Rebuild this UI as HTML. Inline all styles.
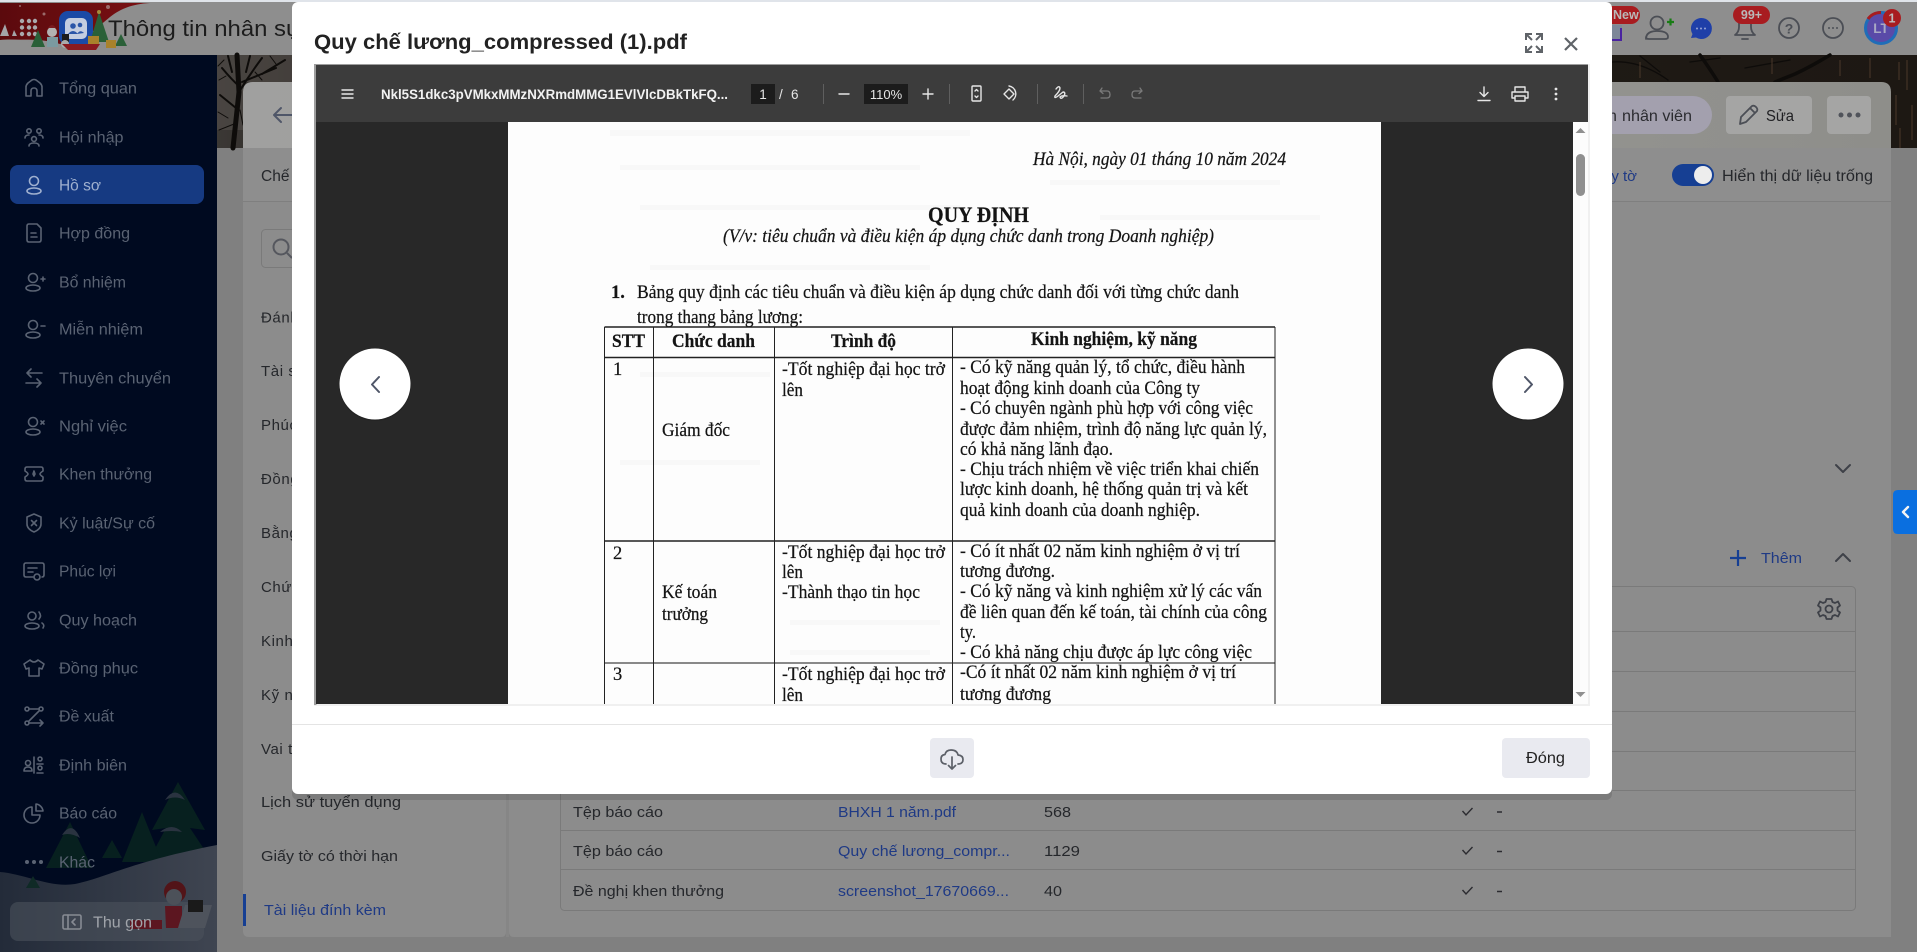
<!DOCTYPE html>
<html lang="vi"><head><meta charset="utf-8"><title>Quy chế lương</title>
<style>
html,body{margin:0;padding:0;width:1917px;height:952px;overflow:hidden;background:#808080}
svg{display:block;position:absolute;left:0;top:0}
text{font-family:"Liberation Sans","Noto Sans CJK SC",sans-serif}
.m text{fill:#5a6373;font-size:15.5px}
.ic{fill:none;stroke:#5a6373;stroke-width:1.6;stroke-linecap:round;stroke-linejoin:round}
.l text{fill:#25272b;font-size:15px}
.t text{fill:#25272b;font-size:14.5px}
.a{fill:#1f3a85!important}
.pdf text{font-family:"Liberation Serif","Noto Serif CJK SC",serif;fill:#141414;stroke:#141414;stroke-width:.22px;font-size:18.5px}
.pdf .b{font-weight:bold}
.pdf .i{font-style:italic}
.tb{fill:none;stroke:#e6e6e6;stroke-width:1.4;stroke-linecap:round;stroke-linejoin:round}
.ti{fill:none;stroke:#4b4e55;stroke-width:1.8;stroke-linecap:round;stroke-linejoin:round}
</style></head><body>
<svg width="1917" height="952" viewBox="0 0 1917 952" xmlns="http://www.w3.org/2000/svg">
<defs>
<clipPath id="cp"><rect x="317" y="122" width="1256" height="582"/></clipPath>
<linearGradient id="hd" x1="0" x2="1"><stop offset="0" stop-color="#a0a09f"/><stop offset=".5" stop-color="#9a9a98"/><stop offset="1" stop-color="#8e8e8a"/></linearGradient>
<linearGradient id="bg" x1="0" x2="1"><stop offset="0" stop-color="#3b3835"/><stop offset=".08" stop-color="#24201c"/><stop offset="1" stop-color="#1d1813"/></linearGradient>
<linearGradient id="sn" x1="0" y1="0" x2="1" y2="0"><stop offset="0" stop-color="#232b39"/><stop offset="1" stop-color="#3f4551"/></linearGradient>
<linearGradient id="red" x1="0" x2="1"><stop offset="0" stop-color="#5b0a0d"/><stop offset="1" stop-color="#7a1013"/></linearGradient>
</defs>

<!-- page base -->
<rect width="1917" height="952" fill="#808080"/>
<rect width="1917" height="55" fill="#8e8e8e"/>
<rect width="1917" height="2" fill="#e0e4ea"/>

<!-- header art -->
<path d="M0 3H150C132 4 120 9 110 17L92 32L60 44C40 38 20 40 0 40Z" fill="url(#red)"/>
<path d="M0 40C20 38 30 42 45 44L70 48H130V55H0Z" fill="#8f8f8f"/>
<path d="M0 36L5 24L9 36ZM12 36L14 30L17 36Z" fill="#a5a5a8"/>
<g fill="#a9a9ad"><circle cx="22" cy="21" r="2.2"/><circle cx="29" cy="21" r="2.2"/><circle cx="35" cy="21" r="2.2"/><circle cx="22" cy="27.500" r="2.2"/><circle cx="29" cy="27.500" r="2.2"/><circle cx="35" cy="27.500" r="2.2"/><circle cx="22" cy="34" r="2.2"/><circle cx="29" cy="34" r="2.2"/><circle cx="35" cy="34" r="2.2"/></g>
<circle cx="20" cy="6" r="1" fill="#9a6a6a"/><circle cx="44" cy="14" r="1.500" fill="#9a6a6a"/><circle cx="108" cy="7" r="2" fill="#9a6a6a"/>
<rect x="59" y="11" width="34" height="34" rx="9" fill="#1b4aa6"/>
<rect x="65" y="18" width="22" height="21" rx="5" fill="#c4cde0"/>
<circle cx="73" cy="26" r="2.8" fill="#2a55a8"/><circle cx="80" cy="25" r="2.3" fill="#2a55a8"/><path d="M68 34Q73 28 78 34ZM77 34Q80 29 84 33Z" fill="#2a55a8"/>
<path d="M99 12L109 42H90Z" fill="#2a6038"/><circle cx="99" cy="12" r="2" fill="#a58a3a"/>
<path d="M38 30L45 47H31Z" fill="#2a6038"/><path d="M121 34L127 46H115Z" fill="#2a6038"/>
<circle cx="52" cy="32" r="5" fill="#b2b2b2"/><rect x="47" y="37" width="11" height="10" fill="#7b9aa0"/><path d="M48 28Q52 22 56 28Z" fill="#7a1a1e"/>
<rect x="62" y="34" width="7" height="8" fill="#1c1c1c"/><circle cx="65" cy="44" r="4" fill="#ababab"/>
<rect x="88" y="36" width="11" height="8" fill="#a9822c"/><rect x="106" y="40" width="10" height="8" fill="#a9822c"/>
<path d="M62 44H100L96 50H68Z" fill="#8a1a20"/>
<text x="108" y="36" font-size="22.5" fill="#1c1c1c" textLength="194" lengthAdjust="spacingAndGlyphs">Thông tin nhân sự</text>

<!-- header right icons -->
<rect x="1612" y="25" width="10" height="14" fill="#7d8798"/>
<path d="M1612 40H1621V28" fill="none" stroke="#4a23a0" stroke-width="2"/>
<rect x="1590" y="6" width="50" height="18" rx="9" fill="#a81c20"/>
<text x="1613" y="19" font-size="12.500" font-weight="bold" fill="#b9b9b9">New</text>
<g class="ti" stroke="#555"><circle cx="1657" cy="23" r="6.5"/><path d="M1646 39Q1646 31 1657 31Q1668 31 1668 37Q1668 39 1665 39H1649Q1646 39 1646 37Z"/></g>
<path d="M1667 22H1674M1670.500 18.500V25.500" stroke="#187c14" stroke-width="2.200" fill="none"/>
<path d="M1701 18A10.500 10.500 0 1 1 1696 37.500L1691 38L1692.500 34A10.500 10.500 0 0 1 1701 18Z" fill="#1f3fa8"/>
<g fill="#97a5d6"><circle cx="1697" cy="28.500" r="1"/><circle cx="1701" cy="28.500" r="1"/><circle cx="1705" cy="28.500" r="1"/></g>
<g class="ti"><path d="M1735 35Q1739 32 1739 27V22H1751V27Q1751 32 1755 35Z"/><path d="M1742 39H1748"/></g>
<rect x="1733" y="6" width="37" height="18" rx="9" fill="#a81c20"/>
<text x="1751.500" y="19" font-size="12.500" font-weight="bold" fill="#b9b9b9" text-anchor="middle">99+</text>
<circle cx="1789" cy="28" r="10" class="ti"/>
<text x="1789" y="33.500" font-size="14" font-weight="bold" fill="#4b4e55" text-anchor="middle">?</text>
<circle cx="1833" cy="28" r="10" class="ti"/>
<g fill="#4b4e55"><circle cx="1829" cy="28" r="1"/><circle cx="1833" cy="28" r="1"/><circle cx="1837" cy="28" r="1"/></g>
<circle cx="1881" cy="28" r="15.500" fill="#5a4aa8" stroke="#1f6db8" stroke-width="3"/>
<path d="M1868 19A15.500 15.500 0 0 1 1881 12.500" fill="none" stroke="#a81c20" stroke-width="3"/>
<text x="1881" y="33" font-size="13.500" font-weight="bold" fill="#a9a9c4" text-anchor="middle">LT</text>
<circle cx="1892" cy="18" r="9" fill="#a81c20"/>
<text x="1892" y="22.500" font-size="12.500" font-weight="bold" fill="#bdbdbd" text-anchor="middle">1</text>

<!-- bg image band -->
<rect x="217" y="55" width="1700" height="93" fill="url(#bg)"/>
<path d="M217 55H292V82H243V130H217Z" fill="#55514c" opacity=".55"/>
<g fill="none" stroke="#0e0c0a" stroke-linecap="round">
<path d="M237 55L239 92L233 148" stroke-width="5"/>
<path d="M222 68Q232 80 239 86M262 58Q250 74 239 92M276 68Q252 78 242 82M220 95L236 108M228 56L232 72M250 56L246 72M285 60L262 74" stroke-width="2"/>
<path d="M219 80L226 76M224 60L218 66M270 56L276 64M255 72L262 80M218 112L228 118M240 110L243 125M219 130L234 124" stroke-width="1"/>
<path d="M1700 55Q1712 72 1718 82M1830 55Q1812 66 1795 74L1775 82" stroke-width="3.500"/>
<path d="M1612 62Q1640 60 1668 80M1640 56L1660 72M1690 62L1720 58M1745 68L1790 60" stroke-width="1.300"/>
</g>
<g fill="none" stroke="#4a382a" stroke-width="1">
<path d="M1896 95V125M1907 60V90M1899 62V80M1912 105V140M1870 58V78M1840 60V76M1772 58V74M1640 62V78M1900 128V148"/>
</g>
<!-- card header -->
<path d="M243 148V92Q243 82 253 82H1881Q1891 82 1891 92V148Z" fill="url(#hd)"/>
<path d="M274 115H292M274 115L281 108M274 115L281 122" fill="none" stroke="#4f5668" stroke-width="2" stroke-linecap="round" stroke-linejoin="round"/>
<rect x="1500" y="96" width="212" height="38" rx="19" fill="#a3a0ae"/>
<text x="1608" y="121" font-size="16" fill="#2b2b30">n</text>
<text x="1622" y="121" font-size="16" fill="#2b2b30" textLength="70" lengthAdjust="spacingAndGlyphs">nhân viên</text>
<rect x="1726" y="96" width="86" height="38" rx="4" fill="#a5a5a4"/>
<path d="M1740 124L1741 117L1752 106Q1754 105 1756 107Q1758 109 1757 111L1746 122ZM1750 108L1755 113" fill="none" stroke="#4b4e55" stroke-width="1.800" stroke-linejoin="round"/>
<text x="1766" y="121" font-size="16" fill="#1f1f22" textLength="28" lengthAdjust="spacingAndGlyphs">Sửa</text>
<rect x="1827" y="96" width="44" height="38" rx="4" fill="#a5a5a4"/>
<g fill="#50535a"><circle cx="1841" cy="115" r="2.500"/><circle cx="1849.500" cy="115" r="2.500"/><circle cx="1858" cy="115" r="2.500"/></g>

<!-- card body -->
<path d="M243 148H1891V937H514Q509 937 509 932V205H506V932Q506 937 501 937H249Q243 937 243 931Z" fill="#8c8c8c"/>
<rect x="243" y="148" width="1648" height="53" fill="#8e8e8e"/>
<rect x="243" y="201" width="1648" height="1" fill="#7f7f7f"/>
<rect x="506" y="202" width="3" height="735" fill="#868686"/>
<text x="261" y="181" font-size="15.500" fill="#25272b">Chế độ</text>
<text x="1637" y="181" font-size="15" fill="#1f3a85" text-anchor="end">Giấy tờ</text>
<rect x="1672" y="164" width="42" height="22" rx="11" fill="#163f93"/><circle cx="1703" cy="175" r="9" fill="#ededed"/>
<text x="1722" y="181" font-size="15.500" fill="#25272b" textLength="151" lengthAdjust="spacingAndGlyphs">Hiển thị dữ liệu trống</text>
<rect x="261.500" y="229.500" width="120" height="38" rx="4" fill="none" stroke="#7a7a7a"/>
<circle cx="281" cy="247" r="7.500" fill="none" stroke="#55575e" stroke-width="2"/><path d="M287 253L292 258" stroke="#55575e" stroke-width="2"/>

<g class="l">
<text x="261" y="322.500" letter-spacing=".6">Đánh giá</text>
<text x="261" y="376" letter-spacing=".6">Tài sản</text>
<text x="261" y="430" letter-spacing=".6">Phúc lợi</text>
<text x="261" y="484" letter-spacing=".6">Đồng phục</text>
<text x="261" y="538" letter-spacing=".6">Bằng cấp</text>
<text x="261" y="592" letter-spacing=".6">Chứng chỉ</text>
<text x="261" y="646" letter-spacing=".6">Kinh nghiệm</text>
<text x="261" y="700" letter-spacing=".6">Kỹ năng</text>
<text x="261" y="754" letter-spacing=".6">Vai trò</text>
<text x="261" y="807" textLength="140" lengthAdjust="spacingAndGlyphs">Lịch sử tuyển dụng</text>
<text x="261" y="861" textLength="137" lengthAdjust="spacingAndGlyphs">Giấy tờ có thời hạn</text>
<text class="a" x="264" y="915" textLength="122" lengthAdjust="spacingAndGlyphs">Tài liệu đính kèm</text>
</g>
<rect x="243" y="894" width="3" height="32" fill="#163f93"/>

<!-- right section -->
<path d="M1836 465L1843 472L1850 465" fill="none" stroke="#3e4148" stroke-width="2" stroke-linecap="round" stroke-linejoin="round"/>
<path d="M1730 558H1746M1738 550V566" stroke="#163f93" stroke-width="2.200" fill="none"/>
<text x="1761" y="563" font-size="15" fill="#1f3a85" textLength="41" lengthAdjust="spacingAndGlyphs">Thêm</text>
<path d="M1836 561L1843 554L1850 561" fill="none" stroke="#3e4148" stroke-width="2" stroke-linecap="round" stroke-linejoin="round"/>
<rect x="560.500" y="586.500" width="1295" height="324" rx="4" fill="none" stroke="#7a7a7a"/>
<g fill="#7a7a7a"><rect x="560" y="631" width="1295" height="1"/><rect x="560" y="671" width="1295" height="1"/><rect x="560" y="711" width="1295" height="1"/><rect x="560" y="751" width="1295" height="1"/><rect x="560" y="790" width="1295" height="1"/><rect x="560" y="830" width="1295" height="1"/><rect x="560" y="869" width="1295" height="1"/></g>
<g transform="translate(1829,609)" fill="none" stroke="#3e4148" stroke-width="1.800" stroke-linejoin="round"><circle r="3.500"/><path d="M-2.500-10H2.500L3.500-7L6-6L9-7.500L11-3.500L8.500-1.500V1.500L11 3.500L9 7.500L6 6L3.500 7L2.500 10H-2.500L-3.500 7L-6 6L-9 7.500L-11 3.500L-8.500 1.500V-1.500L-11-3.500L-9-7.500L-6-6L-3.500-7Z"/></g>
<g class="t">
<text x="573" y="817" textLength="90" lengthAdjust="spacingAndGlyphs">Tệp báo cáo</text>
<text x="573" y="856" textLength="90" lengthAdjust="spacingAndGlyphs">Tệp báo cáo</text>
<text x="573" y="896" textLength="151" lengthAdjust="spacingAndGlyphs">Đề nghị khen thưởng</text>
<text class="a" x="838" y="817" textLength="118" lengthAdjust="spacingAndGlyphs">BHXH 1 năm.pdf</text>
<text class="a" x="838" y="856" textLength="172" lengthAdjust="spacingAndGlyphs">Quy chế lương_compr...</text>
<text class="a" x="838" y="896" textLength="171" lengthAdjust="spacingAndGlyphs">screenshot_17670669...</text>
<text x="1044" y="817" textLength="27" lengthAdjust="spacingAndGlyphs">568</text>
<text x="1044" y="856" textLength="36" lengthAdjust="spacingAndGlyphs">1129</text>
<text x="1044" y="896" textLength="18" lengthAdjust="spacingAndGlyphs">40</text>
</g>
<g fill="none" stroke="#2b2b30" stroke-width="1.400"><path d="M1462.500 811L1466 815L1472.500 808M1462.500 850L1466 854L1472.500 847M1462.500 890L1466 894L1472.500 887"/><path d="M1497 812H1502M1497 851.500H1502M1497 891.500H1502" stroke-width="1.400"/></g>

<!-- side tab -->
<path d="M1917 490H1898Q1893 490 1893 495V529Q1893 534 1898 534H1917Z" fill="#0a6fe0"/>
<path d="M1908 507L1903 512L1908 517" fill="none" stroke="#f4f4f4" stroke-width="2.400" stroke-linecap="round" stroke-linejoin="round"/>

<!-- sidebar -->
<rect y="55" width="217" height="897" fill="#000a20"/>
<rect x="10" y="165" width="194" height="39" rx="8" fill="#163a82"/>
<!-- winter scene -->
<path d="M178 782L205 830L190 828L210 858L150 858L166 828L152 830Z" fill="#07201f"/>
<path d="M70 822L92 868H46Z" fill="#07201f"/><path d="M142 812L162 862H122Z" fill="#07201f"/>
<path d="M112 840L122 858H102Z" fill="#07201f"/>
<path d="M165 800Q175 785 185 800Q175 795 165 800ZM160 832Q172 822 182 832Q172 830 160 832ZM62 835Q72 820 80 838Q70 832 62 835Z" fill="#2a3340"/>
<path d="M0 872C25 874 50 888 75 884C105 878 130 862 217 845V952H0Z" fill="url(#sn)"/>
<path d="M33 876L40 888H26Z" fill="#0f2a26"/>
<rect x="10" y="902" width="194" height="39" rx="8" fill="#4b515c" opacity=".6"/>
<circle cx="175" cy="892" r="11" fill="#521418"/><circle cx="174" cy="897" r="8" fill="#4c5159"/>
<path d="M165 906H182V928H166Z" fill="#5c1620"/><path d="M185 905H212L205 928H178Z" fill="#4e535c"/><rect x="188" y="900" width="15" height="12" fill="#1a1a1a"/>
<rect x="130" y="920" width="32" height="9" fill="#5c1620"/>

<g class="ic" transform="translate(34,88)"><path d="M-8 8V-1Q-8-3-6-5L-2-8Q0-9 2-8L6-5Q8-3 8-1V8H3V3Q3 0 0 0Q-3 0-3 3V8Z"/></g>
<g class="ic" transform="translate(34,137)"><circle cx="-5" cy="-6" r="2.200"/><circle cx="5" cy="-6" r="2.200"/><circle cx="0" cy="2" r="2.400"/><path d="M-9 1Q-9-2-5-2M9 1Q9-2 5-2M-5 9Q-5 6 0 6Q5 6 5 9"/></g>
<g class="ic" transform="translate(34,185)" style="stroke:#9fb0cf"><circle cy="-4" r="4.500"/><ellipse cy="6" rx="7" ry="3"/></g>
<g class="ic" transform="translate(34,233)"><path d="M-7-7Q-7-9-5-9H3L7-5V7Q7 9 5 9H-5Q-7 9-7 7ZM-3 0H2M-3 4H3"/></g>
<g class="ic" transform="translate(34,282)"><circle cx="-1" cy="-4" r="4.500"/><ellipse cx="-1" cy="6" rx="7" ry="3"/><path d="M7-3H11M9-5V-1"/></g>
<g class="ic" transform="translate(34,329)"><circle cx="-1" cy="-4" r="4.500"/><ellipse cx="-1" cy="6" rx="7" ry="3"/><path d="M7-3H11"/></g>
<g class="ic" transform="translate(34,378)"><path d="M-7-5H8M-3-9L-7-5L-3-1M7 5H-8M3 1L7 5L3 9"/></g>
<g class="ic" transform="translate(34,426)"><circle cx="-1" cy="-4" r="4.500"/><ellipse cx="-1" cy="6" rx="7" ry="3"/><path d="M7-5L10-2M10-5L7-2"/></g>
<g class="ic" transform="translate(34,474)"><path d="M-7-7H7Q9-7 9-5V-3Q6-1 6 0Q6 1 9 3V5Q9 7 7 7H-7Q-9 7-9 5V3Q-6 1-6 0Q-6-1-9-3V-5Q-9-7-7-7ZM0-3L1 0L0 2L-1 0Z"/></g>
<g class="ic" transform="translate(34,523)"><path d="M0-9L7-6V1Q7 6 0 9Q-7 6-7 1V-6ZM-2.500-2.500L2.500 2.500M2.500-2.500L-2.500 2.500"/></g>
<g class="ic" transform="translate(34,571)"><path d="M-1 6H-8Q-10 6-10 4V-6Q-10-8-8-8H8Q10-8 10-6V4Q10 6 8 6M-6-3H3M-6 1H-1"/><circle cx="3" cy="6" r="3"/></g>
<g class="ic" transform="translate(34,620)"><circle cx="-2" cy="-4" r="4"/><ellipse cx="-2" cy="6" rx="7" ry="3"/><path d="M5-8Q8-4 5-1M8 3Q11 5 9 8"/></g>
<g class="ic" transform="translate(34,668)"><path d="M-4-8L-10-4L-8 1L-5 0V8H5V0L8 1L10-4L4-8Q0-4-4-8Z"/></g>
<g class="ic" transform="translate(34,716)"><circle cx="-7" cy="-7" r="2"/><circle cx="7" cy="-7" r="2"/><circle cx="-7" cy="7" r="2"/><path d="M-5-7H5M5-5L-5 5M-5 7H9M6 4L9 7L6 10"/></g>
<g class="ic" transform="translate(34,765)"><circle cx="-6" cy="-2" r="2.500"/><path d="M-10 6Q-10 2-6 2Q-2 2-2 6ZM0-8V8"/><circle cx="6" cy="-6" r="2"/><circle cx="6" cy="3" r="2"/><path d="M3-1H9M3 8H9"/></g>
<g class="ic" transform="translate(34,813)"><path d="M-2-6A8 8 0 1 0 6 2H-2ZM2-9A8 8 0 0 1 9-2H2Z"/></g>
<g fill="#5a6373" transform="translate(34,862)"><circle cx="-7" r="2"/><circle r="2"/><circle cx="7" r="2"/></g>
<g class="ic" style="stroke:#878b93" transform="translate(72,922)"><rect x="-9" y="-7" width="18" height="14" rx="1.500"/><path d="M-4-7V7M3-3L0 0L3 3"/></g>

<g class="m">
<text x="59" y="93.500" textLength="78" lengthAdjust="spacingAndGlyphs">Tổng quan</text>
<text x="59" y="142.500" textLength="64.500" lengthAdjust="spacingAndGlyphs">Hội nhập</text>
<text x="59" y="190.500" textLength="42" lengthAdjust="spacingAndGlyphs" style="fill:#9fb0cf">Hồ sơ</text>
<text x="59" y="238.500" textLength="71" lengthAdjust="spacingAndGlyphs">Hợp đồng</text>
<text x="59" y="287.500" textLength="67" lengthAdjust="spacingAndGlyphs">Bổ nhiệm</text>
<text x="59" y="334.500" textLength="84" lengthAdjust="spacingAndGlyphs">Miễn nhiệm</text>
<text x="59" y="383.500" textLength="112" lengthAdjust="spacingAndGlyphs">Thuyên chuyển</text>
<text x="59" y="431.500" textLength="68" lengthAdjust="spacingAndGlyphs">Nghỉ việc</text>
<text x="59" y="479.500" textLength="93" lengthAdjust="spacingAndGlyphs">Khen thưởng</text>
<text x="59" y="528.500" textLength="96" lengthAdjust="spacingAndGlyphs">Kỷ luật/Sự cố</text>
<text x="59" y="576.500" textLength="57" lengthAdjust="spacingAndGlyphs">Phúc lợi</text>
<text x="59" y="625.500" textLength="78" lengthAdjust="spacingAndGlyphs">Quy hoạch</text>
<text x="59" y="673.500" textLength="79" lengthAdjust="spacingAndGlyphs">Đồng phục</text>
<text x="59" y="721.500" textLength="55" lengthAdjust="spacingAndGlyphs">Đề xuất</text>
<text x="59" y="770.500" textLength="68" lengthAdjust="spacingAndGlyphs">Định biên</text>
<text x="59" y="818.500" textLength="58" lengthAdjust="spacingAndGlyphs">Báo cáo</text>
<text x="59" y="867.500" textLength="36" lengthAdjust="spacingAndGlyphs">Khác</text>
<text x="93" y="927.500" textLength="59" lengthAdjust="spacingAndGlyphs" style="fill:#a0a4aa">Thu gọn</text>
</g>

<!-- modal -->
<rect x="292" y="2" width="1320" height="792" rx="6" fill="#000" opacity=".12" transform="translate(0,6)"/>
<rect x="292" y="2" width="1320" height="792" rx="6" fill="#fff"/>
<text x="314" y="49" font-size="21" font-weight="bold" fill="#222" textLength="373" lengthAdjust="spacingAndGlyphs">Quy chế lương_compressed (1).pdf</text>
<g fill="none" stroke="#5f6368" stroke-width="2"><path d="M1526 40V34H1532M1526 34L1532 40M1542 40V34H1536M1542 34L1536 40M1526 46V52H1532M1526 52L1532 46M1542 46V52H1536M1542 52L1536 46"/><path d="M1565 38L1577 50M1577 38L1565 50" stroke-width="2.200"/></g>

<!-- viewer -->
<rect x="314" y="64" width="1276" height="642" fill="#f0f0f0"/>
<rect x="314" y="64" width="1274" height="1.500" fill="#9e9e9e"/>
<rect x="314" y="64" width="2.500" height="641" fill="#9e9e9e"/>
<rect x="316" y="65" width="1272" height="57" fill="#3c3c3c"/>
<rect x="316" y="122" width="1257" height="582" fill="#282828"/>
<rect x="1573" y="122" width="15" height="582" fill="#fcfcfc"/>
<rect x="1576" y="154" width="9" height="42" rx="4.500" fill="#8f8f8f"/>
<path d="M1575.500 133L1580.500 128L1585.500 133Z" fill="#8f8f8f"/><path d="M1575.500 692L1580.500 697L1585.500 692Z" fill="#8f8f8f"/>

<!-- toolbar -->
<g class="tb"><path d="M342 90H353M342 94H353M342 98H353"/></g>
<text x="381" y="99" font-size="13.500" font-weight="bold" fill="#f2f2f2" textLength="347" lengthAdjust="spacingAndGlyphs">Nkl5S1dkc3pVMkxMMzNXRmdMMG1EVlVlcDBkTkFQ...</text>
<rect x="751" y="84" width="24" height="20" fill="#1c1c1c"/>
<text x="763" y="99" font-size="13.500" fill="#e6e6e6" text-anchor="middle">1</text>
<text x="779" y="99" font-size="13.500" fill="#e6e6e6">/</text>
<text x="791" y="99" font-size="13.500" fill="#e6e6e6">6</text>
<rect x="823" y="84" width="1" height="20" fill="#5f5f5f"/>
<path class="tb" d="M839 94H849"/>
<rect x="864" y="84" width="44" height="20" fill="#1c1c1c"/>
<text x="886" y="99" font-size="13" fill="#e6e6e6" text-anchor="middle">110%</text>
<path class="tb" d="M923 94H933M928 89V99"/>
<rect x="949" y="84" width="1" height="20" fill="#5f5f5f"/>
<g class="tb" stroke-width="1.200"><rect x="972" y="86" width="9" height="15" rx="1"/><path d="M975 91L976.500 89.500L978 91M975 96L976.500 97.500L978 96"/></g>
<g class="tb" stroke-width="1.200"><path d="M1009 89L1004 94L1009 99L1014 94Z"/><path d="M1009 86A8 8 0 0 1 1013 100"/></g>
<rect x="1037" y="84" width="1" height="20" fill="#5f5f5f"/>
<path class="tb" stroke-width="1.200" d="M1056 89Q1059 85 1060 88Q1060 91 1055 96Q1054 99 1058 96L1063 92Q1066 92 1064 96Q1061 100 1060 97Q1062 95 1067 96"/>
<rect x="1083" y="84" width="1" height="20" fill="#5f5f5f"/>
<g fill="none" stroke="#7a7a7a" stroke-width="1.300" stroke-linecap="round" stroke-linejoin="round"><path d="M1102 88L1100 91H1107Q1110 91 1110 94.500Q1110 98 1107 98H1101M1100 91L1103 93.500"/><path d="M1140 88L1142 91H1135Q1132 91 1132 94.500Q1132 98 1135 98H1141M1142 91L1139 93.500"/></g>
<g class="tb"><path d="M1484 87V96M1480 92.500L1484 96.500L1488 92.500M1478 100.500H1490"/></g>
<g class="tb" stroke-width="1.300"><path d="M1515 92V87H1525V92M1515 98H1512V92H1528V98H1525"/><rect x="1515" y="96" width="10" height="5"/></g>
<g fill="#e6e6e6"><circle cx="1556" cy="89" r="1.400"/><circle cx="1556" cy="94" r="1.400"/><circle cx="1556" cy="99" r="1.400"/></g>

<!-- pdf page -->
<g clip-path="url(#cp)">
<rect x="508" y="122" width="873" height="582" fill="#fdfdfd"/>
<g fill="#f8f8f8">
<rect x="610" y="130" width="360" height="6"/><rect x="620" y="165" width="300" height="5"/><rect x="640" y="205" width="320" height="5"/><rect x="650" y="265" width="280" height="5"/><rect x="640" y="372" width="130" height="5"/><rect x="1100" y="215" width="220" height="5"/><rect x="1050" y="180" width="230" height="5"/><rect x="620" y="460" width="140" height="5"/><rect x="790" y="620" width="150" height="5"/><rect x="790" y="650" width="140" height="5"/>
</g>
<g class="pdf">
<text class="i" x="1033" y="165" textLength="253" lengthAdjust="spacingAndGlyphs">Hà Nội, ngày 01 tháng 10 năm 2024</text>
<text class="b" x="928" y="222" style="font-size:22px" textLength="101" lengthAdjust="spacingAndGlyphs">QUY ĐỊNH</text>
<text class="i" x="723" y="242" textLength="491" lengthAdjust="spacingAndGlyphs">(V/v: tiêu chuẩn và điều kiện áp dụng chức danh trong Doanh nghiệp)</text>
<text class="b" x="611" y="298">1.</text>
<text x="637" y="298" textLength="602" lengthAdjust="spacingAndGlyphs">Bảng quy định các tiêu chuẩn và điều kiện áp dụng chức danh đối với từng chức danh</text>
<text x="637" y="323" textLength="166" lengthAdjust="spacingAndGlyphs">trong thang bảng lương:</text>
<text class="b" x="612" y="347" textLength="33" lengthAdjust="spacingAndGlyphs">STT</text>
<text class="b" x="672" y="347" textLength="83" lengthAdjust="spacingAndGlyphs">Chức danh</text>
<text class="b" x="831" y="347" textLength="65" lengthAdjust="spacingAndGlyphs">Trình độ</text>
<text class="b" x="1031" y="345" textLength="166" lengthAdjust="spacingAndGlyphs">Kinh nghiệm, kỹ năng</text>
<text x="613" y="375">1</text>
<text x="782" y="375" textLength="163" lengthAdjust="spacingAndGlyphs">-Tốt nghiệp đại học trở</text>
<text x="782" y="396" textLength="21" lengthAdjust="spacingAndGlyphs">lên</text>
<text x="662" y="436" textLength="68" lengthAdjust="spacingAndGlyphs">Giám đốc</text>
<text x="960" y="373" textLength="285" lengthAdjust="spacingAndGlyphs">- Có kỹ năng quản lý, tổ chức, điều hành</text>
<text x="960" y="394" textLength="240" lengthAdjust="spacingAndGlyphs">hoạt động kinh doanh của Công ty</text>
<text x="960" y="414" textLength="293" lengthAdjust="spacingAndGlyphs">- Có chuyên ngành phù hợp với công việc</text>
<text x="960" y="435" textLength="307" lengthAdjust="spacingAndGlyphs">được đảm nhiệm, trình độ năng lực quản lý,</text>
<text x="960" y="455" textLength="153" lengthAdjust="spacingAndGlyphs">có khả năng lãnh đạo.</text>
<text x="960" y="475" textLength="299" lengthAdjust="spacingAndGlyphs">- Chịu trách nhiệm về việc triển khai chiến</text>
<text x="960" y="495" textLength="288" lengthAdjust="spacingAndGlyphs">lược kinh doanh, hệ thống quản trị và kết</text>
<text x="960" y="516" textLength="240" lengthAdjust="spacingAndGlyphs">quả kinh doanh của doanh nghiệp.</text>
<text x="613" y="559">2</text>
<text x="782" y="558" textLength="163" lengthAdjust="spacingAndGlyphs">-Tốt nghiệp đại học trở</text>
<text x="782" y="578" textLength="21" lengthAdjust="spacingAndGlyphs">lên</text>
<text x="782" y="598" textLength="138" lengthAdjust="spacingAndGlyphs">-Thành thạo tin học</text>
<text x="662" y="598" textLength="55" lengthAdjust="spacingAndGlyphs">Kế toán</text>
<text x="662" y="620" textLength="46" lengthAdjust="spacingAndGlyphs">trưởng</text>
<text x="960" y="557" textLength="280" lengthAdjust="spacingAndGlyphs">- Có ít nhất 02 năm kinh nghiệm ở vị trí</text>
<text x="960" y="577" textLength="95" lengthAdjust="spacingAndGlyphs">tương đương.</text>
<text x="960" y="597" textLength="302" lengthAdjust="spacingAndGlyphs">- Có kỹ năng và kinh nghiệm xử lý các vấn</text>
<text x="960" y="618" textLength="307" lengthAdjust="spacingAndGlyphs">đề liên quan đến kế toán, tài chính của công</text>
<text x="960" y="638" textLength="16" lengthAdjust="spacingAndGlyphs">ty.</text>
<text x="960" y="658" textLength="292" lengthAdjust="spacingAndGlyphs">- Có khả năng chịu được áp lực công việc</text>
<text x="613" y="680">3</text>
<text x="782" y="680" textLength="163" lengthAdjust="spacingAndGlyphs">-Tốt nghiệp đại học trở</text>
<text x="782" y="701" textLength="21" lengthAdjust="spacingAndGlyphs">lên</text>
<text x="960" y="678" textLength="276" lengthAdjust="spacingAndGlyphs">-Có ít nhất 02 năm kinh nghiệm ở vị trí</text>
<text x="960" y="700" textLength="91" lengthAdjust="spacingAndGlyphs">tương đương</text>
</g>
<g fill="none" stroke="#222">
<path d="M604.500 327H1275M604.500 357.500H1275" stroke-width="1.500"/>
<path d="M604.500 541H1275" stroke-width="1.500"/>
<path d="M604.500 663H1275" stroke-width="1.300" stroke="#444"/>
<path d="M604.500 327V704M653.500 327V704M774.500 327V704M952.500 327V704M1275 327V704" stroke-width="1"/>
</g>
</g>

<!-- footer -->
<rect x="292" y="724" width="1320" height="1" fill="#e4e4e4"/>
<rect x="930" y="738" width="44" height="40" rx="4" fill="#e9eaf0"/>
<g fill="none" stroke="#5c6068" stroke-width="1.700" stroke-linecap="round" stroke-linejoin="round"><path d="M946 764Q941 764 941 759Q941 755 945 754.500Q946 750 951 750Q957 750 958 755Q963 755.500 963 759.500Q963 764 958 764"/><path d="M952 757V769M948.500 765.500L952 769L955.500 765.500"/></g>
<rect x="1502" y="738" width="88" height="40" rx="4" fill="#e9eaf0"/>
<text x="1526" y="763" font-size="15.500" fill="#222" textLength="39" lengthAdjust="spacingAndGlyphs">Đóng</text>

<!-- prev/next -->
<circle cx="375" cy="385" r="36" fill="#000" opacity=".12"/>
<circle cx="375" cy="384" r="35.500" fill="#fff"/>
<path d="M379 377L372 384.500L379 392" fill="none" stroke="#4f5668" stroke-width="2" stroke-linecap="round" stroke-linejoin="round"/>
<circle cx="1528" cy="385" r="36" fill="#000" opacity=".12"/>
<circle cx="1528" cy="384" r="35.500" fill="#fff"/>
<path d="M1525 377L1532 384.500L1525 392" fill="none" stroke="#4f5668" stroke-width="2" stroke-linecap="round" stroke-linejoin="round"/>
</svg>
</body></html>
